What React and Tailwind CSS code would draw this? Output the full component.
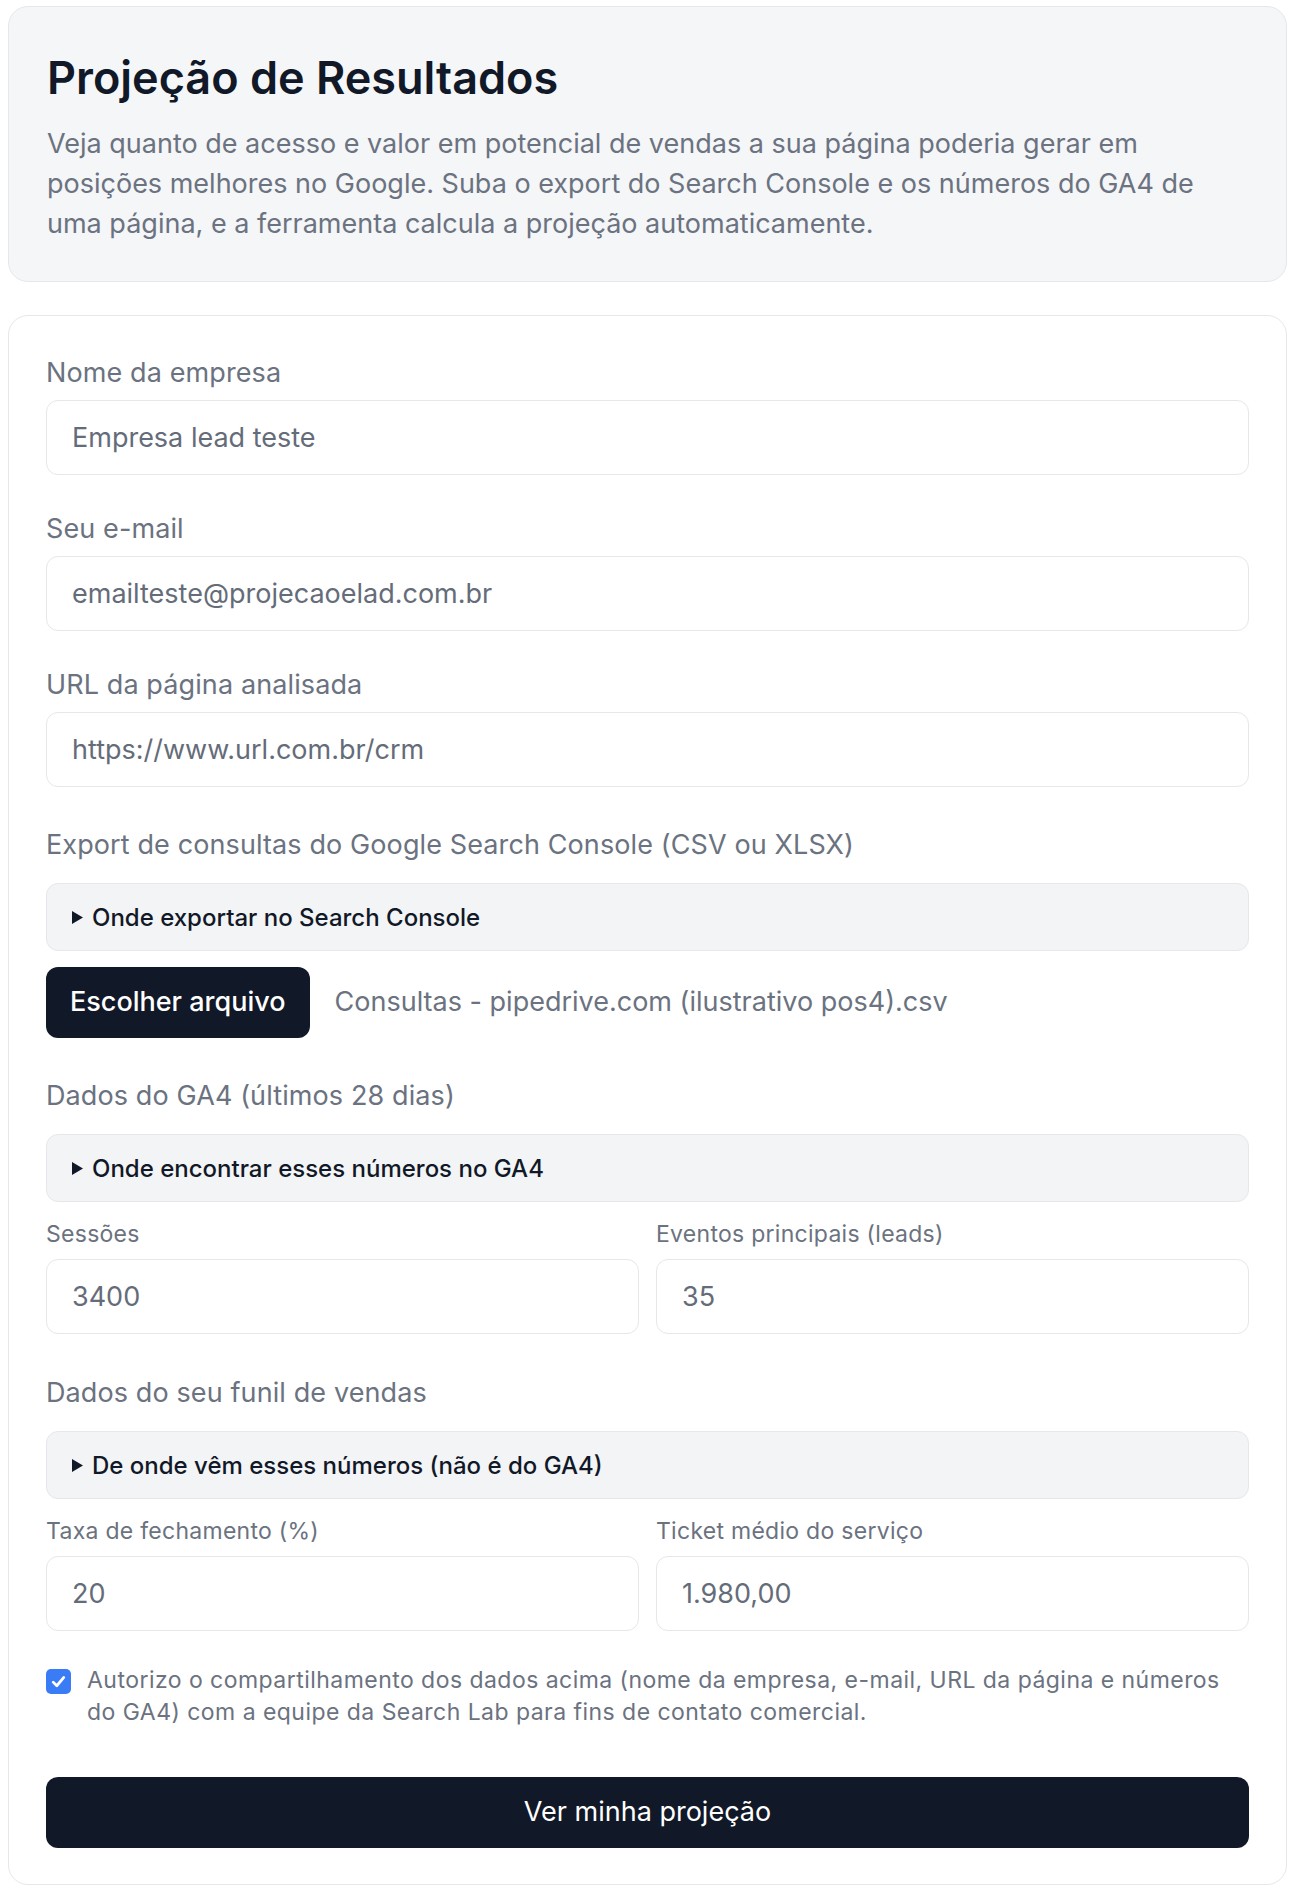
import { useState } from "react";

function Triangle() {
  return (
    <svg width="11" height="13" viewBox="0 0 11 13" className="mr-[9px] shrink-0">
      <path d="M0 0 L11 6.5 L0 13 Z" fill="#111827" />
    </svg>
  );
}

function Help({ title, className = "" }) {
  return (
    <details className={`rounded-[12px] border-[1.5px] border-[#e5e7eb] bg-[#f3f4f6] ${className}`}>
      <summary className="flex list-none items-center px-[25px] py-[15.5px] text-[24px] leading-[35px] font-medium text-[#111827] cursor-pointer [&::-webkit-details-marker]:hidden">
        <Triangle />
        {title}
      </summary>
    </details>
  );
}

function Field({ label, value, small = false, className = "" }) {
  return (
    <div className={className}>
      <label
        className={
          small
            ? "block text-[23px] leading-[31px] tracking-[0.012em] text-[#6b7280]"
            : "block text-[27px] leading-[42px] tracking-[0.004em] text-[#6b7280]"
        }
      >
        {label}
      </label>
      <input
        defaultValue={value}
        className={`${small ? "mt-[9px]" : "mt-[6px]"} block h-[75px] w-full rounded-[12px] border-[1.5px] border-[#e5e7eb] bg-white px-[25px] text-[27px] text-[#656c79] outline-none`}
      />
    </div>
  );
}

export default function App() {
  const [agree, setAgree] = useState(true);

  return (
    <div className="min-h-screen bg-white pl-[8px] pr-[11px] pt-[6px] pb-[10px] font-['Inter',sans-serif]">
      <div className="rounded-[20px] border-[1.5px] border-[#e5e7eb] bg-[#f5f6f8] px-[38px] pt-[37px] pb-[37px]">
        <h1 className="text-[45px] leading-[67px] font-semibold text-[#111827]">
          Projeção de Resultados
        </h1>
        <p className="mt-[13px] text-[27px] leading-[40px] text-[#6b7280]">
          Veja quanto de acesso e valor em potencial de vendas a sua página poderia gerar em
          posições melhores no Google. Suba o export do Search Console e os números do GA4 de
          uma página, e a ferramenta calcula a projeção automaticamente.
        </p>
      </div>

      <form
        onSubmit={(e) => e.preventDefault()}
        className="mt-[33px] rounded-[20px] border-[1.5px] border-[#e5e7eb] bg-white px-[37px] py-[36px]"
      >
        <Field label="Nome da empresa" value="Empresa lead teste" />
        <Field label="Seu e-mail" value="emailteste@projecaoelad.com.br" className="mt-[33px]" />
        <Field label="URL da página analisada" value="https://www.url.com.br/crm" className="mt-[33px]" />

        <div className="mt-[37px] text-[27px] leading-[42px] tracking-[0.004em] text-[#6b7280]">
          Export de consultas do Google Search Console (CSV ou XLSX)
        </div>
        <Help title="Onde exportar no Search Console" className="mt-[17px]" />
        <div className="mt-[16px] flex items-center">
          <button
            type="button"
            className="h-[71px] rounded-[12px] bg-[#111827] px-[24px] text-[27px] font-medium text-white"
          >
            Escolher arquivo
          </button>
          <span className="ml-[25px] text-[27px] text-[#6b7280]">
            Consultas - pipedrive.com (ilustrativo pos4).csv
          </span>
        </div>

        <div className="mt-[37px] text-[27px] leading-[42px] tracking-[0.004em] text-[#6b7280]">
          Dados do GA4 (últimos 28 dias)
        </div>
        <Help title="Onde encontrar esses números no GA4" className="mt-[17px]" />
        <div className="mt-[17px] grid grid-cols-2 gap-x-[17px]">
          <Field small label="Sessões" value="3400" />
          <Field small label="Eventos principais (leads)" value="35" />
        </div>

        <div className="mt-[38px] text-[27px] leading-[42px] tracking-[0.004em] text-[#6b7280]">
          Dados do seu funil de vendas
        </div>
        <Help title="De onde vêm esses números (não é do GA4)" className="mt-[17px]" />
        <div className="mt-[17px] grid grid-cols-2 gap-x-[17px]">
          <Field small label="Taxa de fechamento (%)" value="20" />
          <Field small label="Ticket médio do serviço" value="1.980,00" />
        </div>

        <label className="mt-[34px] flex items-start cursor-pointer">
          <span
            onClick={() => setAgree(!agree)}
            className={`mt-[4px] flex h-[25px] w-[25px] shrink-0 items-center justify-center rounded-[5px] ${agree ? "bg-[#3a7bf6]" : "border-[1.5px] border-[#9ca3af] bg-white"}`}
          >
            {agree && (
              <svg width="17" height="17" viewBox="0 0 16 16">
                <path d="M3 8.6 L6.4 12 L13 4.2" fill="none" stroke="white" strokeWidth="2.6" strokeLinecap="round" strokeLinejoin="round" />
              </svg>
            )}
          </span>
          <span className="ml-[16px] pr-[10px] text-[23px] leading-[31.5px] tracking-[0.02em] text-[#6b7280]">
            Autorizo o compartilhamento dos dados acima (nome da empresa, e-mail, URL da página e
            números do GA4) com a equipe da Search Lab para fins de contato comercial.
          </span>
        </label>

        <button
          type="submit"
          className="mt-[49px] block h-[71px] w-full rounded-[12px] bg-[#111827] text-[27px] text-white"
        >
          Ver minha projeção
        </button>
      </form>
    </div>
  );
}
